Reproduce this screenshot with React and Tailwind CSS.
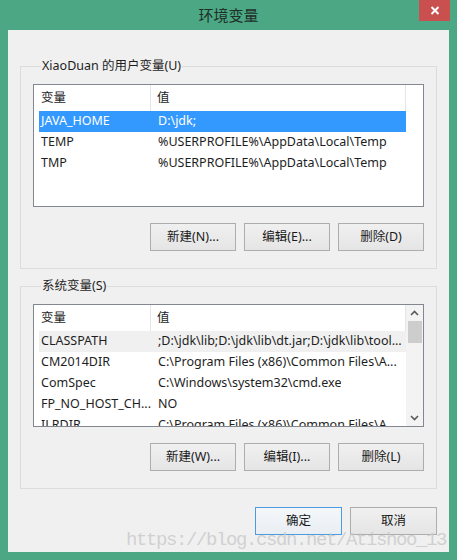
import React from 'react'

const font = "font-['Noto_Sans','Noto_Sans_CJK_SC',sans-serif]"

const userVars = [
  { name: 'JAVA_HOME', value: 'D:\\jdk;', selected: true },
  { name: 'TEMP', value: '%USERPROFILE%\\AppData\\Local\\Temp' },
  { name: 'TMP', value: '%USERPROFILE%\\AppData\\Local\\Temp' },
]

const sysVars = [
  { name: 'CLASSPATH', value: ';D:\\jdk\\lib;D:\\jdk\\lib\\dt.jar;D:\\jdk\\lib\\tool...', focused: true },
  { name: 'CM2014DIR', value: 'C:\\Program Files (x86)\\Common Files\\A...' },
  { name: 'ComSpec', value: 'C:\\Windows\\system32\\cmd.exe' },
  { name: 'FP_NO_HOST_CH...', value: 'NO' },
  { name: 'ILRDIR', value: 'C:\\Program Files (x86)\\Common Files\\A...' },
]

function WinButton({ children, primary, wide }) {
  return (
    <button
      className={
        'h-[28px] flex items-center justify-center text-[12.5px] text-[#1a1a1a] border bg-linear-to-b ' +
        (wide ? 'w-[87px] ' : 'w-[86px] ') +
        (primary
          ? 'border-[#4d9ce0] from-[#f4f7fa] to-[#e9eef3]'
          : 'border-[#adadad] from-[#f0f0f0] to-[#e5e5e5]')
      }
    >
      {children}
    </button>
  )
}

function Chevron({ up }) {
  return (
    <svg width="9" height="6" viewBox="0 0 9 6">
      <polyline
        points={up ? '1,5 4.5,1.5 8,5' : '1,1 4.5,4.5 8,1'}
        fill="none"
        stroke="#5a5a5a"
        strokeWidth="1.6"
      />
    </svg>
  )
}

function VarList({ rows, scroll }) {
  return (
    <div className="relative w-[391px] h-[123px] border border-[#828790] bg-white overflow-hidden flex">
      <div className="flex-1 min-w-0">
        <div className="h-[26px] flex text-[12.5px] text-[#1e1e1e]">
          <div className="w-[117px] pl-[7px] flex items-center border-r border-[#e5e5e5]">变量</div>
          <div className="w-[255px] pl-[6px] flex items-center border-r border-[#e5e5e5]">值</div>
        </div>
        {rows.map((r) => (
          <div
            key={r.name}
            className={
              'ml-[5px] w-[367px] h-[21px] flex items-center text-[12.5px] whitespace-nowrap overflow-hidden ' +
              (r.selected ? 'bg-[#3399ff] text-white' : r.focused ? 'bg-[#f0f0f0] text-[#1e1e1e]' : 'text-[#1e1e1e]')
            }
          >
            <div className="w-[112px] pl-[2px] shrink-0 overflow-hidden">{r.name}</div>
            <div className="pl-[7px] overflow-hidden">{r.value}</div>
          </div>
        ))}
      </div>
      {scroll && (
        <div className="w-[17px] h-full bg-[#f3f3f3] flex flex-col items-center">
          <div className="h-[16px] flex items-center justify-center"><Chevron up /></div>
          <div className="w-[14px] h-[22px] bg-[#cdcdcd]" />
          <div className="flex-1" />
          <div className="h-[17px] flex items-center justify-center"><Chevron /></div>
        </div>
      )}
    </div>
  )
}

function Group({ label, rows, scroll, buttons, className }) {
  return (
    <fieldset className={'ml-[12px] w-[417px] border border-[#dcdcdc] px-[12px] pt-[10px] pb-[17px] ' + className}>
      <legend className="ml-[8px] px-[1px] text-[12.5px] leading-[16px] text-[#1e1e1e]">{label}</legend>
      <VarList rows={rows} scroll={scroll} />
      <div className="mt-[16px] flex justify-end gap-[8px]">
        {buttons.map((b) => (
          <WinButton key={b}>{b}</WinButton>
        ))}
      </div>
    </fieldset>
  )
}

export default function App() {
  return (
    <div className={'w-[457px] h-[560px] bg-[#4ba784] flex flex-col ' + font}>
      {/* title bar */}
      <div className="h-[30px] flex items-start relative">
        <div className="absolute inset-x-0 top-0 h-[30px] flex items-center justify-center text-[15px] text-[#1f2f28]">
          环境变量
        </div>
        <div className="flex-1" />
        <div className="relative mr-[7px] w-[31px] h-[21px] bg-[#c9504f] flex items-center justify-center">
          <svg width="10" height="9" viewBox="0 0 10 9">
            <path d="M1.5 1 L8.5 8 M8.5 1 L1.5 8" stroke="white" strokeWidth="2" />
          </svg>
        </div>
      </div>

      {/* client area */}
      <div className="relative mx-[8px] h-[522px] bg-[#f0f0f0] pt-[28px] flex flex-col">
        <Group
          label="XiaoDuan 的用户变量(U)"
          rows={userVars}
          buttons={['新建(N)...', '编辑(E)...', '删除(D)']}
        />
        <Group
          className="mt-[9px]"
          label="系统变量(S)"
          rows={sysVars}
          scroll
          buttons={['新建(W)...', '编辑(I)...', '删除(L)']}
        />
        <div className="mt-[18px] pr-[12px] flex justify-end gap-[8px]">
          <WinButton primary wide>确定</WinButton>
          <WinButton wide>取消</WinButton>
        </div>

        {/* watermark */}
        <div className="pointer-events-none absolute left-[118px] top-[496px] font-['Liberation_Mono',monospace] text-[19px] tracking-[-1.4px] text-[#c8c8c8]/80 whitespace-nowrap">
          https://blog.csdn.net/Atishoo_13
        </div>
      </div>
    </div>
  )
}
